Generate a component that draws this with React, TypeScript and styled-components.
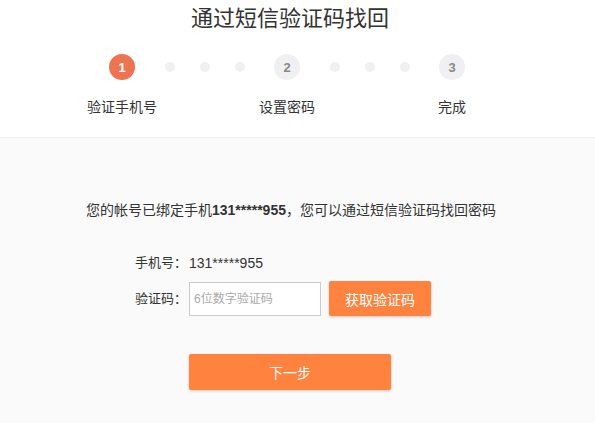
import React from "react";
import styled, { createGlobalStyle } from "styled-components";

const Global = createGlobalStyle`
  html, body { margin: 0; padding: 0; background: #fafafa; }
  body { font-family: "Liberation Sans", "Noto Sans CJK SC", sans-serif; color: #333; }
  * { box-sizing: border-box; }
`;

const Page = styled.div`
  width: 595px;
  min-height: 423px;
  background: #fafafa;
`;

const Header = styled.header`
  background: #fff;
  height: 138px;
  border-bottom: 1px solid #eeeeee;
  display: flex;
  flex-direction: column;
  align-items: center;
  padding-right: 15px;
`;

const Title = styled.h1`
  margin: 4px 0 0;
  font-size: 22px;
  line-height: 30px;
  font-weight: normal;
  color: #333;
`;

const Steps = styled.div`
  display: flex;
  align-items: flex-start;
  margin-top: 20px;
  margin-right: 6px;
`;

const Step = styled.div`
  width: 80px;
  display: flex;
  flex-direction: column;
  align-items: center;
`;

const Circle = styled.div<{ $active?: boolean }>`
  width: 26px;
  height: 26px;
  border-radius: 50%;
  background: ${(p) => (p.$active ? "#ee7451" : "#f0f0f2")};
  color: ${(p) => (p.$active ? "#fff" : "#888")};
  font-weight: bold;
  font-size: 13px;
  display: flex;
  align-items: center;
  justify-content: center;
`;

const StepLabel = styled.div`
  margin-top: 20px;
  font-size: 14px;
  line-height: 14px;
  color: #333;
  white-space: nowrap;
`;

const Dots = styled.div`
  display: flex;
  gap: 25px;
  height: 26px;
  align-items: center;
  padding: 0 2.5px;
`;

const Dot = styled.span`
  width: 10px;
  height: 10px;
  border-radius: 50%;
  background: #f0f0f2;
`;

const Body = styled.main`
  padding: 62px 0 0 86px;
`;

const Message = styled.p`
  margin: 0;
  font-size: 14px;
  line-height: 20px;
  color: #333;
`;

const Strong = styled.b`
  font-weight: bold;
`;

const Form = styled.div`
  padding-left: 49px;
  margin-top: 33px;
  display: flex;
  flex-direction: column;
`;

const Row = styled.div<{ $gap?: number }>`
  display: flex;
  align-items: center;
  margin-top: ${(p) => p.$gap ?? 0}px;
`;

const Label = styled.span`
  width: 54px;
  font-size: 13px;
  line-height: 20px;
  color: #333;
`;

const Value = styled.span`
  font-size: 14px;
  line-height: 20px;
  color: #333;
`;

const Input = styled.input`
  width: 132px;
  height: 34px;
  border: 1px solid #cccccc;
  background: #fff;
  padding: 0 4px;
  font-family: inherit;
  font-size: 12px;
  outline: none;
  &::placeholder { color: #aaa; }
`;

const OrangeButton = styled.button<{ $w: number; $h: number }>`
  width: ${(p) => p.$w}px;
  height: ${(p) => p.$h}px;
  border: none;
  border-radius: 2px;
  background: #ff823f;
  color: #fff;
  font-family: inherit;
  font-size: 14px;
  box-shadow: 0 1px 3px rgba(0, 0, 0, 0.2);
  cursor: pointer;
  padding: 0;
`;

const NextWrap = styled.div`
  padding-left: 103px;
  margin-top: 38px;
`;

export default function App() {
  return (
    <Page>
      <Global />
      <Header>
        <Title>通过短信验证码找回</Title>
        <Steps>
          <Step>
            <Circle $active>1</Circle>
            <StepLabel>验证手机号</StepLabel>
          </Step>
          <Dots>
            <Dot />
            <Dot />
            <Dot />
          </Dots>
          <Step>
            <Circle>2</Circle>
            <StepLabel>设置密码</StepLabel>
          </Step>
          <Dots>
            <Dot />
            <Dot />
            <Dot />
          </Dots>
          <Step>
            <Circle>3</Circle>
            <StepLabel>完成</StepLabel>
          </Step>
        </Steps>
      </Header>
      <Body>
        <Message>
          您的帐号已绑定手机<Strong>131*****955</Strong>，您可以通过短信验证码找回密码
        </Message>
        <Form>
          <Row>
            <Label>手机号：</Label>
            <Value>131*****955</Value>
          </Row>
          <Row $gap={8}>
            <Label>验证码：</Label>
            <Input placeholder="6位数字验证码" />
            <OrangeButton $w={102} $h={35} style={{ marginLeft: 8 }}>
              获取验证码
            </OrangeButton>
          </Row>
        </Form>
        <NextWrap>
          <OrangeButton $w={202} $h={36}>下一步</OrangeButton>
        </NextWrap>
      </Body>
    </Page>
  );
}
